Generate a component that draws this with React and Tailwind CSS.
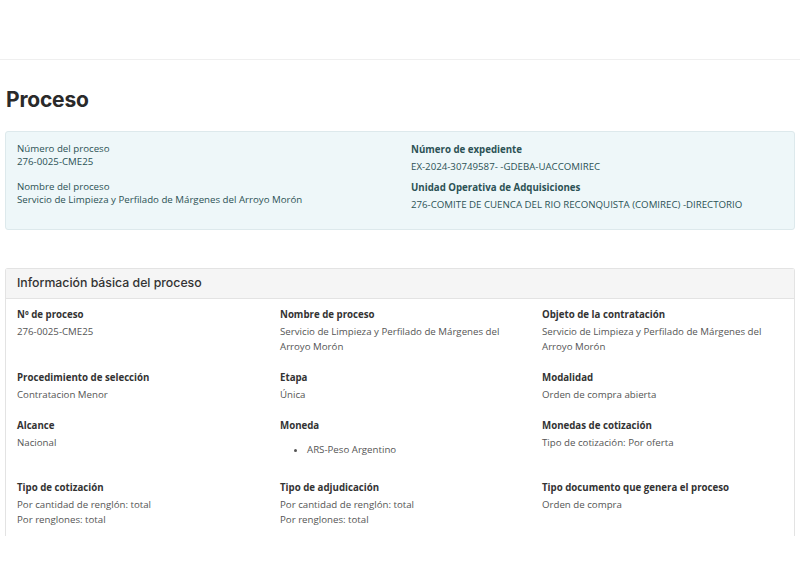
export default function App() {
  const items = [
    { label: "Nº de proceso", lines: ["276-0025-CME25"] },
    { label: "Nombre de proceso", lines: ["Servicio de Limpieza y Perfilado de Márgenes del Arroyo Morón"] },
    { label: "Objeto de la contratación", lines: ["Servicio de Limpieza y Perfilado de Márgenes del Arroyo Morón"] },
    { label: "Procedimiento de selección", lines: ["Contratacion Menor"] },
    { label: "Etapa", lines: ["Única"] },
    { label: "Modalidad", lines: ["Orden de compra abierta"] },
    { label: "Alcance", lines: ["Nacional"] },
    { label: "Moneda", list: ["ARS-Peso Argentino"] },
    { label: "Monedas de cotización", lines: ["Tipo de cotización: Por oferta"] },
    { label: "Tipo de cotización", lines: ["Por cantidad de renglón: total", "Por renglones: total"] },
    { label: "Tipo de adjudicación", lines: ["Por cantidad de renglón: total", "Por renglones: total"] },
    { label: "Tipo documento que genera el proceso", lines: ["Orden de compra"] },
  ];
  return (
    <div className="w-[800px] h-[579px] bg-white overflow-hidden" style={{ fontFamily: '"Open Sans", sans-serif' }}>
      <div className="h-[60px] border-b border-[#efefef]"></div>
      <div className="px-[5px]">
        <h1 className="pt-[25px] pb-[16px] text-[21px] leading-[30px] font-bold text-[#2a2a2a] pl-[1px] tracking-[-0.2px]" style={{ fontFamily: 'Inter, sans-serif' }}>Proceso</h1>
        <div className="h-[99px] rounded-[3px] border border-[#dde9ec] bg-[#eef7f9] pl-[11px] pt-[10px] flex text-[9.7px] text-[#2c5255]">
          <div className="w-[394px]">
            <div className="leading-[13px]">Número del proceso</div>
            <div className="leading-[13px]">276-0025-CME25</div>
            <div className="leading-[13px] mt-[12px]">Nombre del proceso</div>
            <div className="leading-[13px]">Servicio de Limpieza y Perfilado de Márgenes del Arroyo Morón</div>
          </div>
          <div className="-mt-[1px]">
            <div className="leading-[17px] font-bold">Número de expediente</div>
            <div className="leading-[17px]">EX-2024-30749587- -GDEBA-UACCOMIREC</div>
            <div className="leading-[17px] font-bold mt-[4px]">Unidad Operativa de Adquisiciones</div>
            <div className="leading-[17px]">276-COMITE DE CUENCA DEL RIO RECONQUISTA (COMIREC) -DIRECTORIO</div>
          </div>
        </div>
        <div className="mt-[38px] h-[268px] rounded-t-[3px] border-x border-t border-[#e3e3e3]">
          <div className="h-[30px] bg-[#f5f5f5] border-b border-[#e3e3e3] pl-[11px] flex items-center text-[12.3px] font-medium text-[#333]" style={{ fontFamily: 'Inter, sans-serif' }}>
            Información básica del proceso
          </div>
          <div className="grid grid-cols-[263px_262px_1fr] gap-y-[15px] pl-[11px] pt-[7px] pr-[10px]">
            {items.map((it, i) => (
              <div key={i} className="pr-[20px]">
                <div className="text-[9.7px] leading-[18px] font-bold text-[#333]">{it.label}</div>
                {it.lines && it.lines.map((l, j) => (
                  <div key={j} className="text-[9.7px] leading-[15px] text-[#555]">{l}</div>
                ))}
                {it.list && (
                  <ul className="list-disc pl-[27px] my-[7px] text-[9.7px] leading-[15px] text-[#555]">
                    {it.list.map((l, j) => <li key={j}>{l}</li>)}
                  </ul>
                )}
              </div>
            ))}
          </div>
        </div>
      </div>
    </div>
  );
}
